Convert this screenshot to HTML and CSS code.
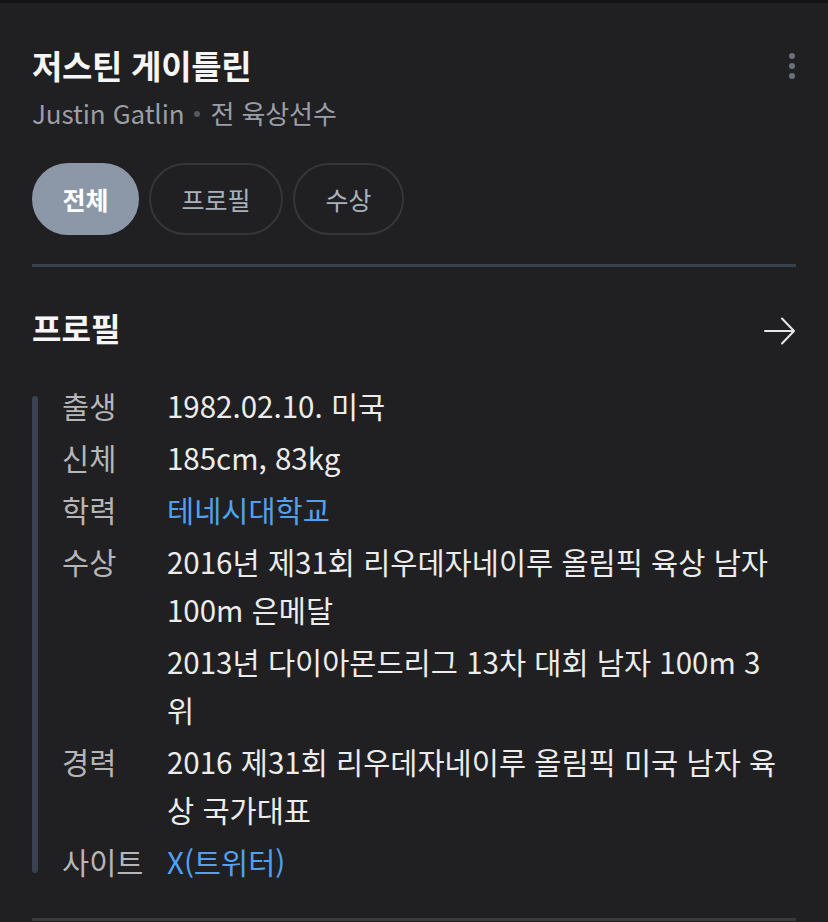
FILE: index.html
```html
<!DOCTYPE html>
<html lang="ko">
<head>
    <meta charset="UTF-8">
    <meta name="viewport" content="width=device-width, initial-scale=1.0">
    <title>저스틴 게이틀린</title>
    <link rel="stylesheet" href="styles.css">
</head>
<body>
    <div class="card">
        <!-- 인물 헤더 -->
        <div class="header">
            <div>
                <h1 class="name">저스틴 게이틀린</h1>
                <p class="sub">Justin Gatlin<span class="dot"></span>전 육상선수</p>
            </div>
            <span class="more"><i></i><i></i><i></i></span>
        </div>

        <div class="tabs">
            <button class="tab active">전체</button>
            <button class="tab">프로필</button>
            <button class="tab">수상</button>
        </div>

        <div class="section">
            <div class="section-head">
                <h2>프로필</h2>
                <svg class="arrow" width="32" height="28" viewBox="0 0 32 28">
                    <path d="M1 14 H30 M18 1.5 L30 14 L18 26.5" fill="none" stroke="#e6e6e6" stroke-width="2" stroke-linecap="round" stroke-linejoin="round"/>
                </svg>
            </div>

            <dl class="info">
                <div class="row">
                    <dt>출생</dt>
                    <dd>1982.02.10. 미국</dd>
                </div>
                <div class="row">
                    <dt>신체</dt>
                    <dd>185cm, 83kg</dd>
                </div>
                <div class="row">
                    <dt>학력</dt>
                    <dd><a href="#">테네시대학교</a></dd>
                </div>
                <div class="row">
                    <dt>수상</dt>
                    <dd>
                        <p>2016년 제31회 리우데자네이루 올림픽 육상 남자 100m 은메달</p>
                        <p>2013년 다이아몬드리그 13차 대회 남자 100m 3위</p>
                    </dd>
                </div>
                <div class="row">
                    <dt>경력</dt>
                    <dd>2016 제31회 리우데자네이루 올림픽 미국 남자 육상 국가대표</dd>
                </div>
                <div class="row">
                    <dt>사이트</dt>
                    <dd><a href="#">X(트위터)</a></dd>
                </div>
            </dl>
        </div>
    </div>
</body>
</html>
```

FILE: styles.css
```css
* {
    margin: 0;
    padding: 0;
    box-sizing: border-box;
}

body {
    font-family: "Noto Sans CJK KR", sans-serif;
    background-color: #202022;
    color: #e8e8e8;
    border-top: 3px solid #141416;
    width: 828px;
    height: 922px;
    overflow: hidden;
}

.card {
    padding: 42px 32px 0;
}

.header {
    display: flex;
    justify-content: space-between;
    align-items: flex-start;
}

.name {
    font-size: 33px;
    line-height: 40px;
    font-weight: 600;
    color: #f5f5f5;
    letter-spacing: -0.3px;
}

.sub {
    margin-top: 12px;
    font-size: 26px;
    line-height: 32px;
    color: #9a9ea6;
    letter-spacing: -0.1px;
}

.sub .dot {
    display: inline-block;
    width: 6px;
    height: 6px;
    margin: 0 10px;
    border-radius: 50%;
    background-color: #54585f;
    vertical-align: 7px;
}

.more {
    display: flex;
    flex-direction: column;
    gap: 4px;
    margin-top: 8px;
    margin-right: 1px;
}

.more i {
    width: 6px;
    height: 6px;
    border-radius: 50%;
    background-color: #6b7079;
}

.tabs {
    display: flex;
    gap: 10px;
    margin-top: 34px;
}

.tab {
    height: 72px;
    padding: 0 30.5px;
    border-radius: 36px;
    border: 2px solid #35363a;
    background: none;
    color: #a9b1bd;
    font-family: inherit;
    font-size: 25px;
}

.tab.active {
    padding: 0 28.5px;
    background-color: #8c97a7;
    border-color: #8c97a7;
    color: #fff;
    font-weight: 700;
}

.section {
    margin-top: 29px;
    border-top: 3px solid #3b414c;
    border-bottom: 3px solid #38393c;
    padding-bottom: 33px;
}

.section-head {
    display: flex;
    justify-content: space-between;
    align-items: center;
    margin-top: 40px;
}

.section-head h2 {
    font-size: 32px;
    line-height: 40px;
    font-weight: 700;
    color: #f5f5f5;
}

.arrow {
    margin-top: 8px;
}

.info {
    margin-top: 34px;
    display: flex;
    flex-direction: column;
    gap: 4px;
    position: relative;
    padding-left: 30px;
}

.info::before {
    content: "";
    position: absolute;
    left: 0;
    top: 15px;
    bottom: 12px;
    width: 6px;
    border-radius: 3px;
    background-color: #3a4150;
}

.row {
    display: flex;
    font-size: 29.5px;
    line-height: 48px;
}

.row dt {
    width: 105px;
    flex-shrink: 0;
    color: #b6b6b8;
}

.row dd {
    flex: 1;
    padding-right: 14px;
    color: #ececec;
}

.row dd p + p {
    margin-top: 4px;
}

.row a {
    color: #52a0f0;
    text-decoration: none;
}
```
